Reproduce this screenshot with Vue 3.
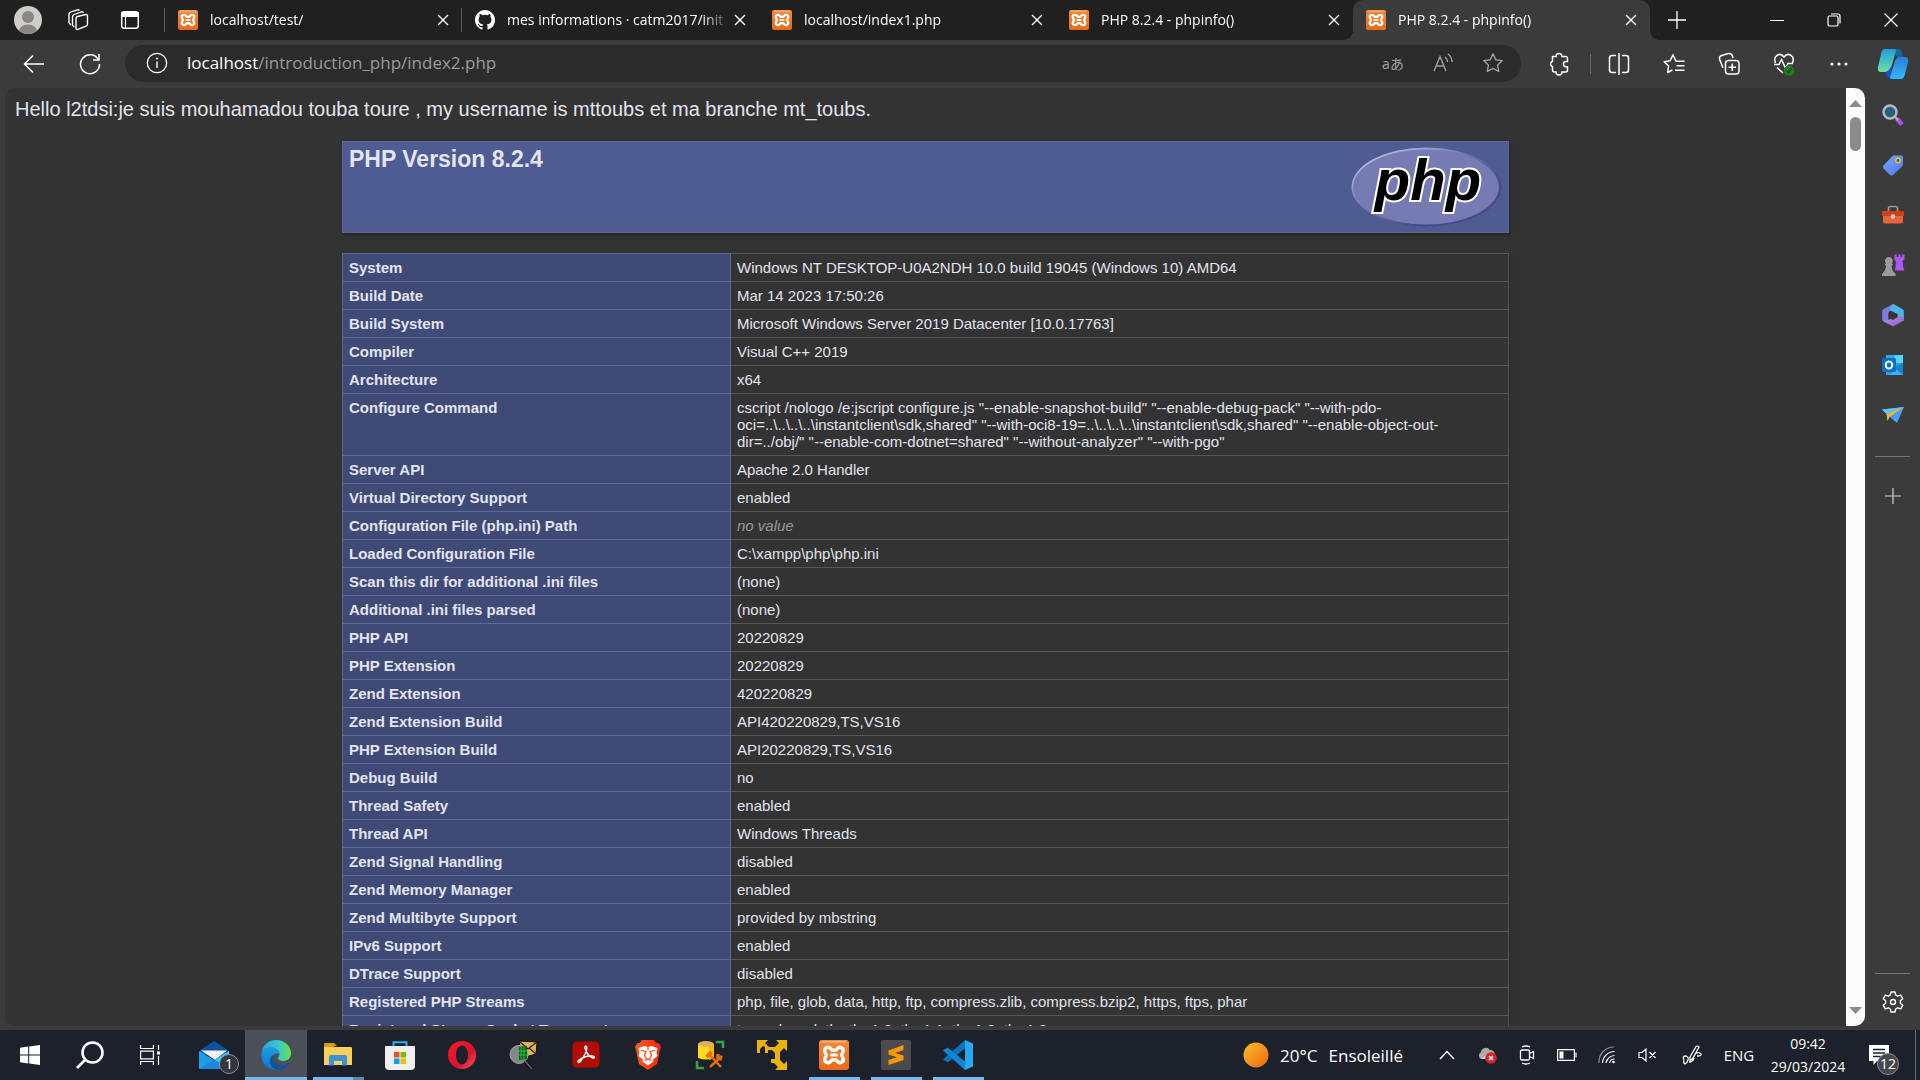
<script setup>
import { ref } from 'vue'

const tabs = [
  { title: 'localhost/test/', icon: 'xampp' },
  { title: 'mes informations · catm2017/init', icon: 'github' },
  { title: 'localhost/index1.php', icon: 'xampp' },
  { title: 'PHP 8.2.4 - phpinfo()', icon: 'xampp' },
  { title: 'PHP 8.2.4 - phpinfo()', icon: 'xampp' },
]
const active = ref(4)

const rows = [
  ['System', 'Windows NT DESKTOP-U0A2NDH 10.0 build 19045 (Windows 10) AMD64'],
  ['Build Date', 'Mar 14 2023 17:50:26'],
  ['Build System', 'Microsoft Windows Server 2019 Datacenter [10.0.17763]'],
  ['Compiler', 'Visual C++ 2019'],
  ['Architecture', 'x64'],
  ['Configure Command', 'cscript /nologo /e:jscript configure.js "--enable-snapshot-build" "--enable-debug-pack" "--with-pdo-oci=..\\..\\..\\..\\instantclient\\sdk,shared" "--with-oci8-19=..\\..\\..\\..\\instantclient\\sdk,shared" "--enable-object-out-dir=../obj/" "--enable-com-dotnet=shared" "--without-analyzer" "--with-pgo"'],
  ['Server API', 'Apache 2.0 Handler'],
  ['Virtual Directory Support', 'enabled'],
  ['Configuration File (php.ini) Path', null],
  ['Loaded Configuration File', 'C:\\xampp\\php\\php.ini'],
  ['Scan this dir for additional .ini files', '(none)'],
  ['Additional .ini files parsed', '(none)'],
  ['PHP API', '20220829'],
  ['PHP Extension', '20220829'],
  ['Zend Extension', '420220829'],
  ['Zend Extension Build', 'API420220829,TS,VS16'],
  ['PHP Extension Build', 'API20220829,TS,VS16'],
  ['Debug Build', 'no'],
  ['Thread Safety', 'enabled'],
  ['Thread API', 'Windows Threads'],
  ['Zend Signal Handling', 'disabled'],
  ['Zend Memory Manager', 'enabled'],
  ['Zend Multibyte Support', 'provided by mbstring'],
  ['IPv6 Support', 'enabled'],
  ['DTrace Support', 'disabled'],
  ['Registered PHP Streams', 'php, file, glob, data, http, ftp, compress.zlib, compress.bzip2, https, ftps, phar'],
  ['Registered Stream Socket Transports', 'tcp, udp, ssl, tls, tlsv1.0, tlsv1.1, tlsv1.2, tlsv1.3'],
]

const tools = ['split', 'favorites', 'collections', 'health', 'more']
const sideApps = ['magnifier', 'tag', 'toolbox', 'chess', 'm365', 'outlook', 'send']
const taskApps = [
  { id: 'mail', badge: '1' },
  { id: 'edge', state: 'focused' },
  { id: 'explorer', state: 'stacked' },
  { id: 'store' },
  { id: 'opera' },
  { id: 'inspect' },
  { id: 'acrobat' },
  { id: 'brave' },
  { id: 'dbtools' },
  { id: 'arrows' },
  { id: 'xampp', state: 'open' },
  { id: 'sublime', state: 'open' },
  { id: 'vscode', state: 'open' },
]
</script>

<template>
  <div class="desktop">
    <svg class="defs" aria-hidden="true">
      <defs>
        <linearGradient id="gOrange" x1="0" y1="0" x2="0" y2="1"><stop offset="0" stop-color="#f58a3c" /><stop offset="1" stop-color="#ea6a16" /></linearGradient>
        <linearGradient id="gSun" x1="0" y1="0" x2="1" y2="1"><stop offset="0" stop-color="#f6c02c" /><stop offset="1" stop-color="#f2660e" /></linearGradient>
        <linearGradient id="gTeal" x1="0" y1="0" x2="0" y2="1"><stop offset="0" stop-color="#1d9fe0" /><stop offset="1" stop-color="#6fe0a0" /></linearGradient>
        <linearGradient id="gBlue" x1="0" y1="0" x2="0" y2="1"><stop offset="0" stop-color="#2b7de0" /><stop offset="1" stop-color="#33b8f5" /></linearGradient>
        <linearGradient id="gTag" x1="0" y1="0" x2="1" y2="1"><stop offset="0" stop-color="#78a6ff" /><stop offset="1" stop-color="#4d78ef" /></linearGradient>
        <linearGradient id="gEdge" x1="0" y1="0" x2="1" y2="0"><stop offset="0" stop-color="#2aa5e6" /><stop offset=".55" stop-color="#35c7d0" /><stop offset="1" stop-color="#6de04c" /></linearGradient>
        <linearGradient id="gEdgeB" x1="0" y1="0" x2="0" y2="1"><stop offset="0" stop-color="#1a9de6" /><stop offset="1" stop-color="#0b76cf" /></linearGradient>
        <linearGradient id="gOpera" x1="0" y1="0" x2="1" y2="1"><stop offset="0" stop-color="#ff1b2d" /><stop offset=".6" stop-color="#d8122a" /><stop offset="1" stop-color="#ff5a5a" /></linearGradient>
        <linearGradient id="gBrave" x1="0" y1="0" x2="1" y2="0"><stop offset="0" stop-color="#ff5a1f" /><stop offset="1" stop-color="#f8250c" /></linearGradient>
        <linearGradient id="gPurple" x1="0" y1="0" x2="1" y2="1"><stop offset="0" stop-color="#cc8dee" /><stop offset="1" stop-color="#7a5fc9" /></linearGradient>
        <linearGradient id="gRim" x1="0" y1="0" x2="1" y2="1"><stop offset="0.1" stop-color="#bfc3e4" /><stop offset=".4" stop-color="#777bb3" /><stop offset=".7" stop-color="#474a8a" /></linearGradient>
      </defs>

      <symbol id="i-xampp" viewBox="0 0 30 30">
        <rect width="30" height="30" rx="3" fill="url(#gOrange)" />
        <path d="M3 1.8h24" stroke="#ffc59a" stroke-width="1.4" opacity=".8" />
        <path d="M12 9C9.5 5.400 4.500 8 6 12c.4 1.200 1.400 1.900 1.400 3S6.400 16.800 6 18c-1.500 4 3.500 6.600 6 3q.8-1.200 1.400-1.200h3.200q.6 0 1.400 1.200c2.500 3.600 7.500 1 6-3-.4-1.200-1.400-1.900-1.400-3s1-1.800 1.400-3c1.500-4-3.500-6.600-6-3q-.8 1.200-1.400 1.200h-3.200Q12.800 10.200 12 9z" fill="#f07a28" stroke="#fff" stroke-width="3.400" stroke-linejoin="round" />
        <path d="M12.500 15h5" stroke="#fff" stroke-width="3" stroke-linecap="round" />
      </symbol>
      <symbol id="i-github" viewBox="0 0 16 16"><path fill="#fff" d="M8 0C3.580 0 0 3.580 0 8c0 3.540 2.290 6.530 5.470 7.590.4.070.55-.17.55-.38 0-.19-.01-.82-.01-1.490-2.010.37-2.530-.49-2.690-.94-.09-.23-.48-.94-.82-1.130-.28-.15-.68-.52-.01-.53.63-.01 1.080.58 1.230.82.72 1.210 1.870.87 2.330.66.07-.52.28-.87.51-1.070-1.780-.2-3.640-.89-3.640-3.950 0-.87.31-1.590.82-2.150-.08-.2-.36-1.020.08-2.120 0 0 .67-.21 2.200.82a7.600 7.600 0 0 1 4 0c1.530-1.040 2.200-.82 2.200-.82.44 1.100.16 1.920.08 2.120.51.56.82 1.270.82 2.150 0 3.070-1.870 3.750-3.650 3.950.29.25.54.73.54 1.480 0 1.070-.01 1.930-.01 2.200 0 .21.15.46.55.38A8 8 0 0 0 16 8c0-4.420-3.580-8-8-8z" /></symbol>
      <symbol id="i-close" viewBox="0 0 12 12"><path d="M1 1l10 10M11 1L1 11" stroke="#fff" stroke-width="1.400" /></symbol>

      <symbol id="i-split" viewBox="0 0 22 24"><g fill="none" stroke="#fff" stroke-width="1.500"><path d="M8 3.500H4A2.500 2.500 0 0 0 1.500 6v12A2.500 2.500 0 0 0 4 20.500h4M14 3.500h4A2.500 2.500 0 0 1 20.500 6v12a2.500 2.500 0 0 1-2.500 2.500h-4M11 1v22" /></g></symbol>
      <symbol id="i-favorites" viewBox="0 0 22 22"><path d="M13 8.300L10 1.800 7.200 7.800l-6 .9 4.400 4.300-1 6.500 4.900-2.700M12.500 8.300H21.500M13.500 12.800h8M12 17.300h9.500" fill="none" stroke="#fff" stroke-width="1.500" stroke-linejoin="round" /></symbol>
      <symbol id="i-collections" viewBox="0 0 22 24"><g fill="none" stroke="#fff" stroke-width="1.500"><rect x="7.500" y="8.500" width="13.500" height="13.500" rx="3" /><path d="M14.200 11.500v7.500M10.500 15.200H18M5 16l-3.500-9q-.5-2.500 2-3.500l7-2q3-.5 4 2.500l.5 2" /></g></symbol>
      <symbol id="i-health" viewBox="0 0 22 24"><path d="M2.500 11C-.5 4 7-.5 11 5c4-5.500 11.500-1 8.500 6M1 12.500h5l2.500-5 4 8.500 2.500-4.500h5M4 15.500l6 5.500" fill="none" stroke="#fff" stroke-width="1.500" /><circle cx="16" cy="18.500" r="5.200" fill="#1f7d1b" /><path d="M13.500 18.500l2 2 3.200-3.800" fill="none" stroke="#0d3f0c" stroke-width="1.200" /></symbol>
      <symbol id="i-more" viewBox="0 0 22 22"><g fill="#fff"><circle cx="4" cy="11" r="1.600" /><circle cx="11" cy="11" r="1.600" /><circle cx="18" cy="11" r="1.600" /></g></symbol>

      <symbol id="i-magnifier" viewBox="0 0 24 24"><path d="M16 16l5 5.500" stroke="#b44cf5" stroke-width="4.500" /><path d="M13 13l4 4" stroke="#aaa" stroke-width="2.500" /><circle cx="9" cy="9" r="6.500" fill="#2b5f7f" stroke="#b9b9b9" stroke-width="2.400" /></symbol>
      <symbol id="i-tag" viewBox="0 0 24 24"><path d="M12 2.500h8q2 0 2 2v8L12 22q-1.500 1-3 0l-6.500-6.500q-1-1.500 0-3z" fill="url(#gTag)" /><circle cx="17" cy="7.500" r="2.200" fill="#44507a" stroke="#f2c41c" stroke-width="1.500" /></symbol>
      <symbol id="i-toolbox" viewBox="0 0 24 24"><path d="M7.500 8V5.500q0-2 2-2h5q2 0 2 2V8" fill="none" stroke="#9b9b9b" stroke-width="1.700" /><path d="M2 12h20v6.500q0 2-2 2H4q-2 0-2-2z" fill="#e5643c" /><path d="M1 8h22v5H1z" fill="#cf4014" /><circle cx="12" cy="13.500" r="2.200" fill="#d5d5d5" /></symbol>
      <symbol id="i-chess" viewBox="0 0 24 24"><path d="M13.500 1.500h2.200V4h1.700V1.500h2.200V4h1.600V1.500h2.300v5l-2 1.500.8 6.500 1.200 3H14l1-9-1.500-1.500z" fill="#ad55f5" /><path d="M8 4a4 4 0 0 1 3 6.500l1 1.500-1.500 1 1 4.500 3 3.500v2H1v-2l3-3.500L5.200 13 3.600 12l1.200-1.500A4 4 0 0 1 8 4z" fill="#9b9b9b" /></symbol>
      <symbol id="i-m365" viewBox="0 0 24 24"><path d="M12 1L2 6.500q-.8.500-.8 1.500v8.500q0 1 .8 1.500l5.500 3V11L10 7z" fill="#7c7be0" /><path d="M12 1q-3 2-3 6.500l7.500 3.500v5L22 18q.8-.5.8-1.500V8q0-1-.8-1.500L13 1.300z" fill="#4db5ea" /><path d="M16.500 13.500L7.500 17 2 18l9 5q1 .5 2 0l9-5q.8-.5.8-1.500l-1-3z" fill="url(#gPurple)" /><path d="M9 7.700l7.500 3.500v3L12 17l-4.500-2.300v-5z" fill="#363636" /></symbol>
      <symbol id="i-outlook" viewBox="0 0 24 24"><path d="M5 2h17v20H5z" fill="#2aa7ea" /><path d="M13.500 2H22v8h-8.500z" fill="#50d9ff" /><path d="M12 14l10-4v12H7z" fill="#1684d4" /><path d="M7 22l8-6 7 6z" fill="#35b3f3" /><rect x="1" y="5" width="14" height="14" rx="1.500" fill="#0a6ccc" /><ellipse cx="8" cy="12" rx="3.300" ry="3.600" fill="none" stroke="#fff" stroke-width="2" /></symbol>
      <symbol id="i-send" viewBox="0 0 24 24"><path d="M1 6.500L23 4 16 20l-6-5z" fill="#4c9df5" /><path d="M1 6.500L23 4 5.500 11z" fill="#5cc5ff" /><path d="M5.500 11L23 4 9 13.500 6.500 18z" fill="#f2b632" /></symbol>

      <symbol id="i-mail" viewBox="0 0 30 30"><path d="M0 11L15 1l15 10v4H0z" fill="#0a549f" /><path d="M2 10.500h26L16 20z" fill="#f1f1f1" /><path d="M0 11l15 9 15-9v18H0z" fill="#1e9bea" /><path d="M15 20l15-9v18z" fill="#38c5f8" /><path d="M0 29L15 19.500 30 29z" fill="#1b88dc" /></symbol>
      <symbol id="i-edge" viewBox="0 0 30 30"><path d="M.6 14C1 6 7 0 15 0c9 0 15 6.500 15 13 0 5-3.500 8-7.500 8-3.500 0-5.500-1.600-5.500-2.800 0-1.200 1.500-1.700 1.500-4.200C18.500 11 15 7.500 10 7.500 5 7.500 1.500 10 .6 14z" fill="url(#gEdge)" /><path d="M.5 14C2 9.500 6 7.500 10 7.500c5 0 8.500 3 8.500 6.500-6-2.500-10 4-6.500 9.500 2 3.200 5.500 5 8 5.500C13 32 0 28 .5 14z" fill="url(#gEdgeB)" /><path d="M12.500 14.500C9.500 21.500 16 26 21 25.500c3.500-.3 5.500-2.300 6.500-2.500.6 0 .5.600.2 1.200C24 30 17 31 13 28.500 7 25 8 17 12.500 14.500z" fill="#10519f" /></symbol>
      <symbol id="i-explorer" viewBox="0 0 30 30"><path d="M1 4q0-1 1-1h9l3 3h-3v6H1z" fill="#d99a12" /><path d="M1 7h27q1 0 1 1v17H1z" fill="#fbcf5a" /><path d="M6 25.500V17q0-2 2-2h14q2 0 2 2v8.500h-5V21h-8v4.500z" fill="#3b92dc" /></symbol>
      <symbol id="i-store" viewBox="0 0 30 30"><path d="M8.500 7V2.200h13V7" fill="none" stroke="#29aef2" stroke-width="2" /><path d="M0 6h30v20q0 4-4 4H4q-4 0-4-4z" fill="#f0f0f0" /><path d="M9 12h5.500v5.500H9z" fill="#f04e23" /><path d="M15.500 12H21v5.500h-5.500z" fill="#7eb900" /><path d="M9 18.500h5.500V24H9z" fill="#00a3ee" /><path d="M15.500 18.500H21V24h-5.500z" fill="#ffb800" /></symbol>
      <symbol id="i-opera" viewBox="0 0 30 30"><path fill-rule="evenodd" d="M15 1a14 14 0 1 0 0 28 14 14 0 0 0 0-28zm0 4.500c3.400 0 6 4 6 9.500s-2.600 9.500-6 9.500S9 20.500 9 15s2.600-9.500 6-9.500z" fill="url(#gOpera)" /></symbol>
      <symbol id="i-inspect" viewBox="0 0 30 30"><path d="M10 1l18 1-1 12-14 4z" fill="#e2b44f" stroke="#111" /><path d="M10 1l9 8 9-7M27 14l-7-6" fill="none" stroke="#222" stroke-width="1.300" /><circle cx="10" cy="14.500" r="9" fill="#848886" stroke="#a5a5a5" /><path d="M10 7l8-1v13l-8 1z" fill="#0c6018" /><path d="M12 7v12M15 7v12M10 11h8M10 15h8" stroke="#22c43b" /><path d="M16 21l7 8" stroke="#111" stroke-width="4" /><path d="M16 21l7 8" stroke="#666" stroke-width="1.500" /></symbol>
      <symbol id="i-acrobat" viewBox="0 0 30 30"><rect x="1.500" y="1.500" width="27" height="26" rx="4.500" fill="#b30b00" /><path d="M7.500 20.500c-1.500 1.600.6 2.800 2 .8 2.500-3.400 6.800-10.500 6.200-14-.4-1.700-2.300-1.300-1.700.9.900 4 4.500 9 7.500 9.800 2.600.5 2.400-1.700.2-2-3.500-.7-11 1.300-14.200 4.500z" fill="none" stroke="#fff" stroke-width="1.500" /></symbol>
      <symbol id="i-brave" viewBox="0 0 30 30"><path d="M9 0h12l2 3h2.500L28 7l-1 3-3 14-9 6-9-6L3 10 2 7l2.500-4H7z" fill="url(#gBrave)" /><path d="M5.500 8l6-2 3.500 1 3.500-1 6 2-1 5 1 3-4.500 3.500.5 2-5.500 4-5.500-4 .5-2L5.500 16l1-3z" fill="#fff" /><path d="M8 10.500l5 1-1.500 4 2 3M22 10.500l-5 1 1.500 4-2 3M11.500 20.500L15 19l3.500 1.500M15 7v3" fill="none" stroke="#f93f16" stroke-width="1.200" /></symbol>
      <symbol id="i-dbtools" viewBox="0 0 30 30"><path d="M3 4v14q8 3 16 0V4z" fill="#ffd91a" /><path d="M14 4v16l5-2V4z" fill="#f2b805" /><ellipse cx="11" cy="4" rx="8" ry="3" fill="#e0ae5c" /><path d="M21 2h7v6M2 21v7h7" fill="none" stroke="#3f9f46" stroke-width="2.500" /><path d="M14 14l12 13M27 16L15 27" stroke="#e8690b" stroke-width="2.500" /><path d="M11.500 17l5-5M23 14v4l4 1" stroke="#e8690b" stroke-width="3.500" fill="none" /></symbol>
      <symbol id="i-arrows" viewBox="0 0 30 30"><path d="M0 0h11L8 3l4 4h6l4-4-3-3h11v11l-3-3-4 4v8l4 4 3-3v9h-12l3-3-4-4h-3v-4h4v-6l-3-3h-4v3h-3V8L8 7 6 6l-3 3v4H0z" fill="#eab308" /></symbol>
      <symbol id="i-sublime" viewBox="0 0 30 30"><rect width="30" height="30" rx="2" fill="#4b4b4b" /><path d="M7.500 10.500L22.500 5v5l-8.500 3 8.500 2.500v4.500l-15 5v-5l8.500-2.800-8.500-2.700z" fill="#ff9800" /></symbol>
      <symbol id="i-vscode" viewBox="0 0 30 30"><path d="M22 0l8 3.500v23L22 30z" fill="#25a8f0" /><path d="M22 0v8.500L4.500 22.500 0 19.500z" fill="#0a72c2" /><path d="M22 30v-8.500L4.500 7.500 0 10.500z" fill="#0e86d6" /></symbol>
    </svg>

    <header class="titlebar">
      <div class="window-tools">
        <button class="w1" aria-label="Profile"><svg width="28" height="28" viewBox="0 0 28 28"><clipPath id="av"><circle cx="14" cy="14" r="14" /></clipPath><g clip-path="url(#av)"><path d="M0 0h28v28H0z" fill="#cfcdca" /><circle cx="14" cy="11" r="6" fill="#8a8683" /><ellipse cx="14" cy="26.500" rx="9.500" ry="8" fill="#8a8683" /></g></svg></button>
        <button class="w2" aria-label="Workspaces"><svg width="22" height="22" viewBox="0 0 22 22" fill="none" stroke="#fff" stroke-width="1.400"><path d="M9 9.500q0-1.500 1.500-2l8-2q2-.3 2 1.500v8q0 1.500-1.500 2.200l-7.500 3Q9 21 9 19zM5.500 16.500V8q0-2 2-2.700l7-2.500q1.500-.4 2 1M2 14V5.500q0-2 2-2.700L10.500.8q1.500-.4 2 .8M2 14l2 2M5.500 16.500l2 1.500" /></svg></button>
        <button class="w2" aria-label="Tab actions"><svg width="20" height="20" viewBox="0 0 20 20"><rect x="1.700" y="1.700" width="16.600" height="16.600" rx="2.500" fill="none" stroke="#fff" stroke-width="1.500" /><path d="M1.500 2h17v5h-17z" fill="#fff" /><path d="M5.500 7v11" stroke="#fff" stroke-width="1.200" /></svg></button>
        <span class="tool-sep"></span>
      </div>
      <nav class="tabs">
        <div v-for="(t, i) in tabs" :key="i" class="tab" :class="{ active: active === i, sep: i === 0 }">
          <svg class="fav"><use :href="'#i-' + t.icon" /></svg>
          <button class="tab-title" @click="active = i">{{ t.title }}</button>
          <button class="tab-close" aria-label="Close tab"><svg width="12" height="12"><use href="#i-close" /></svg></button>
        </div>
      </nav>
      <button class="new-tab" aria-label="New tab"><svg width="18" height="18" viewBox="0 0 18 18"><path d="M9 0v18M0 9h18" stroke="#fff" stroke-width="1.300" /></svg></button>
      <div class="win-controls">
        <button aria-label="Minimize"><svg width="14" height="14"><path d="M0 7.500h14" stroke="#fff" /></svg></button>
        <button aria-label="Restore"><svg width="14" height="14" fill="none" stroke="#fff" stroke-width="1.200"><rect x="1" y="3" width="10" height="10" rx="1.500" /><path d="M4 1h7q2 0 2 2v7.500" /></svg></button>
        <button aria-label="Close"><svg width="14" height="14"><path d="M.5.500l13 13M13.500.500l-13 13" stroke="#fff" stroke-width="1.200" /></svg></button>
      </div>
    </header>

    <div class="toolbar">
      <button class="nav-btn back" aria-label="Back"><svg width="22" height="20" viewBox="0 0 22 20" fill="none" stroke="#fff" stroke-width="1.500"><path d="M21 10H1.500M10 1.500L1.500 10l8.500 8.500" /></svg></button>
      <button class="nav-btn" aria-label="Refresh"><svg width="22" height="22" viewBox="0 0 22 22" fill="none" stroke="#fff" stroke-width="1.500"><path d="M19.500 7A9.500 9.500 0 1 0 20.500 11M20 1v6h-6" /></svg></button>
      <div class="address">
        <button class="info" aria-label="Site information"><svg width="22" height="22" viewBox="0 0 22 22"><circle cx="11" cy="11" r="9.700" fill="none" stroke="#fff" stroke-width="1.300" /><path d="M11 9.500V16" stroke="#fff" stroke-width="1.400" /><circle cx="11" cy="6.500" r="1.100" fill="#fff" /></svg></button>
        <a class="url" href="#"><b>localhost</b>/introduction_php/index2.php</a>
        <button class="pill-btn lang" aria-label="Translate">aあ</button>
        <button class="pill-btn" aria-label="Read aloud"><svg width="20" height="20" viewBox="0 0 20 20" fill="none" stroke="#a2a2a2" stroke-width="1.400"><path d="M1 18L7 3.500 13 18M3.200 13h7.600M12 4q2.500 2 2.500 5M15 1q4 3 4 8" /></svg></button>
        <button class="pill-btn" aria-label="Favorite"><svg width="22" height="22" viewBox="0 0 22 22"><path d="M11 1.800l2.800 5.900 6.500.9-4.700 4.500 1.100 6.400L11 16.400l-5.700 3.100 1.100-6.400L1.700 8.600l6.500-.9z" fill="none" stroke="#a2a2a2" stroke-width="1.400" stroke-linejoin="round" /></svg></button>
      </div>
      <button class="tool-btn" aria-label="Extensions"><svg width="22" height="24" viewBox="0 0 22 24"><path d="M4.500 4.500H8a3 3 0 0 1 6 0h3.500q2 0 2 2V9.500H18a2.600 2.600 0 0 0 0 5.200h1.500V18q0 2-2 2H14a3 3 0 0 1-6 0H6.500q-2 0-2-2v-3.200a3 3 0 0 1 0-5.600z" fill="none" stroke="#fff" stroke-width="1.500" /></svg></button>
      <span class="bar-sep"></span>
      <button v-for="t in tools" :key="t" class="tool-btn" :aria-label="t"><svg width="22" height="24"><use :href="'#i-' + t" /></svg></button>
      <button class="copilot" aria-label="Copilot"><svg width="32" height="32" viewBox="0 0 32 32"><path d="M9 1h12q3 0 4 4l1 4h-6l-3-6z" fill="#17679a" /><path d="M8 1h9q2.500 0 1.800 2.500L14 20q-1 4-5 4H4q-4 0-3-5L4.500 4Q5.500 1 8 1z" fill="url(#gTeal)" /><path d="M8 24q4-1 5-4l2-3-1 14q-3 0-4-3z" fill="#0f53cf" /><path d="M24 31h-9q-2.500 0-1.800-2.500L18 13q1-4 5-4h5q4 0 3 5l-3.500 14q-1 3-3.500 3z" fill="url(#gBlue)" /></svg></button>
    </div>

    <div class="body">
      <main class="viewport">
        <article class="page">
          <p class="hello">Hello l2tdsi:je suis mouhamadou touba toure , my username is mttoubs et ma branche mt_toubs.</p>
          <section class="head">
            <h1>PHP Version 8.2.4</h1>
            <svg class="logo" width="151" height="80" viewBox="0 0 151 80" role="img" aria-label="PHP logo">
              <ellipse cx="75.500" cy="40" rx="75" ry="39.500" fill="url(#gRim)" />
              <ellipse cx="75" cy="40" rx="73" ry="37.500" fill="#777bb3" />
              <text x="77" y="53" text-anchor="middle">php</text>
            </svg>
          </section>
          <table class="info-table">
            <tbody>
              <tr v-for="[name, value] in rows" :key="name">
                <th scope="row">{{ name }}</th>
                <td><i v-if="value === null">no value</i><template v-else>{{ value }}</template></td>
              </tr>
            </tbody>
          </table>
        </article>
        <div class="scrollbar">
          <svg width="13" height="7"><path d="M0 7L6.500 0 13 7z" fill="#8b8b8b" /></svg>
          <span class="thumb"></span>
          <svg class="down" width="13" height="7"><path d="M0 0h13L6.500 7z" fill="#8b8b8b" /></svg>
        </div>
      </main>
      <aside class="sidebar">
        <button v-for="s in sideApps" :key="s" :aria-label="s"><svg width="24" height="24"><use :href="'#i-' + s" /></svg></button>
        <hr />
        <button class="add" aria-label="Customize"><svg width="16" height="16"><path d="M8 0v16M0 8h16" stroke="#d0d0d0" stroke-width="1.200" /></svg></button>
        <hr class="bottom" />
        <button class="gear" aria-label="Settings"><svg width="22" height="22" viewBox="0 0 22 22" fill="none" stroke="#fff" stroke-width="1.400" stroke-linejoin="round"><path d="M9 1h4l.7 3 2 1.200 3-1 2 3.500-2.300 2v2.600l2.300 2-2 3.500-3-1-2 1.200L13 21H9l-.7-3-2-1.200-3 1-2-3.500 2.300-2V9.700l-2.300-2 2-3.500 3 1 2-1.200z" /><circle cx="11" cy="11" r="2.500" /></svg></button>
      </aside>
    </div>

    <footer class="taskbar">
      <div class="system">
        <button aria-label="Start"><svg width="20" height="20" viewBox="0 0 20 20" fill="#fff"><path d="M0 2.800l8.200-1.200v8H0zM9.200 1.500L20 0v9.600H9.200zM0 10.500h8.200v8L0 17.300zM9.200 10.500H20V20L9.200 18.600z" /></svg></button>
        <button aria-label="Search"><svg width="28" height="28" viewBox="0 0 28 28" fill="none" stroke="#fff" stroke-width="2.600"><circle cx="16.500" cy="11.500" r="10" /><path d="M9.500 18.500L1 27" /></svg></button>
        <button aria-label="Task view"><svg width="20" height="20" viewBox="0 0 20 20" fill="none" stroke="#fff" stroke-width="1.200"><path d="M.6 0v3.500h12.800V0M.6 20v-3.500h12.800V20M.6 6.200h12.800v7.600H.6zM18.500 0v5M18.500 11v9" /><path d="M17 6.500h3v3h-3z" fill="#fff" stroke="none" /></svg></button>
      </div>
      <div class="apps">
        <button v-for="a in taskApps" :key="a.id" :class="a.state" :aria-label="a.id">
          <svg width="30" height="30"><use :href="'#i-' + a.id" /></svg>
          <span v-if="a.badge" class="badge">{{ a.badge }}</span>
        </button>
      </div>
      <div class="tray">
        <button class="weather"><svg width="26" height="26"><circle cx="13" cy="13" r="12.500" fill="url(#gSun)" /></svg><span>20°C</span><span>Ensoleillé</span></button>
        <button aria-label="Show hidden icons"><svg width="16" height="10" fill="none" stroke="#fff" stroke-width="1.400"><path d="M1 9l7-7.500L15 9" /></svg></button>
        <button aria-label="OneDrive"><svg width="20" height="18" viewBox="0 0 20 18"><path d="M4 13a4 4 0 0 1 0-7 5 5 0 0 1 9-2 5 5 0 0 1 3 9z" fill="#a9a9a9" /><path d="M4 13l8-6 4 6z" fill="#d9d9d9" /><circle cx="14" cy="12" r="5.800" fill="#dc2430" /><path d="M12 10l4 4M16 10l-4 4" stroke="#fff" stroke-width="1.400" /></svg></button>
        <button aria-label="Meet now"><svg width="16" height="20" viewBox="0 0 16 20" fill="none" stroke="#fff" stroke-width="1.300"><rect x="1.500" y="5" width="9" height="10" rx="1.500" /><path d="M10.500 8.500l4-2v7l-4-2M3 2q4-2 8 0M3 18q4 2 8 0" /></svg></button>
        <button aria-label="Battery"><svg width="20" height="12" fill="none" stroke="#fff" stroke-width="1.200"><path d="M.6.600h16.800v10.800H.6zM19 3.500v5" /><path d="M2.500 2.500h4v7h-4z" fill="#fff" stroke="none" /></svg></button>
        <button aria-label="Network"><svg width="18" height="18" viewBox="0 0 18 18" fill="none" stroke="#fff" stroke-width="1.200"><path d="M1 17A15 15 0 0 1 16 1" stroke="#8b8f95" /><path d="M4.500 17A12 12 0 0 1 16.500 5.500M8 17a9 9 0 0 1 8.500-7.500M11.500 17a5 5 0 0 1 5-4" /><circle cx="15.500" cy="16" r="1.300" fill="#fff" stroke="none" /></svg></button>
        <button class="volume" aria-label="Volume"><svg width="20" height="16" viewBox="0 0 20 16" fill="none" stroke="#fff" stroke-width="1.200"><path d="M1 5.500h3L8 2v12l-4-3.500H1zM11.500 5l6 6M17.500 5l-6 6" /></svg></button>
        <button class="pen" aria-label="Pen"><svg width="20" height="20" viewBox="0 0 20 20" fill="none" stroke="#fff" stroke-width="1.300"><path d="M8 12L14 1.500q1.500-1 3 .5L11 13l-3 3zM2 15q-2-4 2-4 3 1 2 4t-3 4q-2-1-1-4M7 17q4 0 5-4M14 8q4-1 5 1t-4 2" /></svg></button>
        <button class="lang-btn">ENG</button>
        <button class="clock"><span>09:42</span><span>29/03/2024</span></button>
        <button class="notif" aria-label="Notifications"><svg width="20" height="20" viewBox="0 0 20 20"><path d="M0 0h20v16H8l-3.500 4v-4H0z" fill="#fff" /><path d="M4 4.500h12M4 8h12M4 11.500h8" stroke="#1c212b" stroke-width="1.400" /></svg><span class="badge">12</span></button>
        <span class="peek"></span>
      </div>
    </footer>
  </div>
</template>

<style>
html, body { margin: 0; background: #3b3b3b; overflow: hidden; }
</style>

<style scoped>
.desktop { height: 100vh; display: flex; flex-direction: column; overflow: hidden; background: #3b3b3b; color: #fff; font-family: "Open Sans", "Noto Sans", "Noto Sans CJK JP", sans-serif; }
.defs { position: absolute; width: 0; height: 0; }
button { display: flex; align-items: center; justify-content: center; padding: 0; border: 0; background: none; color: inherit; font: inherit; box-sizing: border-box; }
svg { display: block; flex: none; }

.titlebar { display: flex; height: 40px; flex: none; background: #202020; }
.window-tools { display: flex; align-items: center; width: 165px; flex: none; }
.w1 { width: 52px; height: 40px; padding-left: 4px; }
.w2 { width: 52px; height: 40px; }
.tool-sep { width: 1px; height: 24px; margin-left: 8px; background: #5c5c5c; }
.tabs { display: flex; flex: 0 1 1485px; min-width: 0; }
.tab { position: relative; display: flex; flex: 1 1 0; min-width: 0; align-items: center; padding: 0 13px; }
.tab.sep::after { content: ""; position: absolute; right: 0; top: 8px; width: 1px; height: 24px; background: #5c5c5c; }
.tab.active { background: #3b3b3b; border-radius: 10px 10px 0 0; }
.tab.active::before, .tab.active::after { content: ""; position: absolute; bottom: 0; width: 10px; height: 10px; }
.tab.active::before { left: -10px; background: radial-gradient(circle at 0 0, transparent 10px, #3b3b3b 10px); }
.tab.active::after { right: -10px; background: radial-gradient(circle at 100% 0, transparent 10px, #3b3b3b 10px); }
.fav { width: 20px; height: 20px; }
.tab-title { display: block; flex: 1; min-width: 0; margin: 0 4px 0 12px; overflow: hidden; white-space: nowrap; text-align: left; font-size: 14px; line-height: 24px; mask-image: linear-gradient(to right, #000 calc(100% - 28px), transparent); }
.tab-close { width: 12px; height: 24px; }
.new-tab { width: 54px; }
.win-controls { display: flex; margin: 0 1px 0 auto; }
.win-controls button { width: 57px; }

.toolbar { display: flex; align-items: center; height: 48px; flex: none; }
.nav-btn { width: 56px; height: 40px; padding-left: 12px; }
.address { display: flex; align-items: center; flex: 1; height: 37px; margin: 0 10px 2px 13px; padding: 0 3px 0 18px; border-radius: 19px; background: #2b2b2b; box-sizing: border-box; }
.info { width: 28px; }
.url { flex: 1; margin-left: 16px; color: #9b9b9b; text-decoration: none; font-size: 17px; line-height: 24px; }
.url b { font-weight: 400; color: #fff; }
.pill-btn { width: 50px; height: 36px; color: #a2a2a2; }
.lang { font-size: 14px; }
.tool-btn { width: 55px; height: 40px; }
.bar-sep { width: 1px; height: 20px; margin-left: 4px; background: #666; }
.copilot { width: 54px; height: 40px; }

.body { display: flex; flex: 1; min-height: 0; }
.viewport { display: flex; flex: 1; min-width: 0; margin: 0 0 4px 5px; overflow: hidden; border-radius: 10px; background: #333; }
.page { flex: 1; min-width: 0; overflow: hidden; color: #e2e4ef; font-family: "Liberation Sans", Arial, sans-serif; }
.hello { margin: 10px 10px 20px; font-size: 20px; line-height: 23px; }
.head { display: flex; justify-content: space-between; width: 1167px; max-width: 100%; height: 92px; margin: 0 auto 20px; padding: 5px 6px; box-sizing: border-box; border: 1px solid #606a90; background: #4f5b93; box-shadow: 1px 2px 3px rgba(0, 0, 0, 0.3); }
h1 { margin: 0; font-size: 23px; line-height: 24px; }
.logo text { font: italic bold 58px "Liberation Sans", Arial, sans-serif; fill: #000; stroke: #fff; stroke-width: 4px; paint-order: stroke; }
.info-table { width: 1167px; max-width: 100%; margin: 0 auto; border-collapse: collapse; table-layout: fixed; font-size: 15px; line-height: 17px; box-shadow: 1px 2px 3px rgba(0, 0, 0, 0.2); }
th, td { padding: 5px 6px; text-align: left; vertical-align: top; }
th { width: 375px; border: 1px solid #606a90; background: #404a77; }
td { border: 1px solid #555; overflow-wrap: break-word; }
td i { color: #999; }
.scrollbar { display: flex; flex-direction: column; align-items: center; width: 19px; padding: 12px 0; box-sizing: border-box; background: #fcfcfc; }
.thumb { width: 11px; height: 34px; margin-top: 10px; border-radius: 6px; background: #8b8b8b; }
.down { margin-top: auto; }

.sidebar { display: flex; flex-direction: column; align-items: center; width: 55px; padding-top: 2px; box-sizing: border-box; }
.sidebar button { width: 40px; height: 50px; }
.sidebar hr { width: 35px; height: 1px; margin: 16px 0 14px; border: 0; flex: none; background: #777; }
.sidebar .bottom { margin: auto 0 0; }
.sidebar .gear { height: 56px; }

.taskbar { display: flex; height: 50px; flex: none; background: #1c212b; }
.system, .apps { display: flex; }
.system button { width: 60px; }
.apps { margin-left: 3px; }
.apps button { position: relative; width: 62px; }
.apps .focused { background: #4b4f57; }
.apps .focused::after, .apps .open::after, .apps .stacked::after { content: ""; position: absolute; bottom: 0; left: 6px; right: 5px; height: 3px; background: #76b9ed; }
.apps .focused::after { left: 0; right: 0; }
.apps .stacked::after { background: linear-gradient(to right, #76b9ed 40px, #5f89ab 40px); }
.badge { position: absolute; left: 36px; top: 24px; width: 20px; height: 20px; box-sizing: border-box; border: 1px solid #8a8d92; border-radius: 50%; background: #33373d; font-size: 14px; line-height: 18px; text-align: center; }
.tray { display: flex; margin-left: auto; font-size: 17px; }
.tray button { width: 40px; }
.tray .weather { width: auto; margin-right: 24px; gap: 11px; }
.tray .volume { width: 42px; }
.tray .pen { width: 46px; }
.tray .lang-btn { width: 48px; font-size: 15px; }
.tray .clock { flex-direction: column; width: 90px; font-size: 14px; line-height: 23px; }
.tray .notif { position: relative; width: 62px; padding-right: 10px; }
.notif .badge { left: 24px; top: 23px; width: 22px; height: 22px; line-height: 20px; background: #45484d; }
.peek { width: 1px; margin-right: 4px; background: #6a6e75; }
</style>
